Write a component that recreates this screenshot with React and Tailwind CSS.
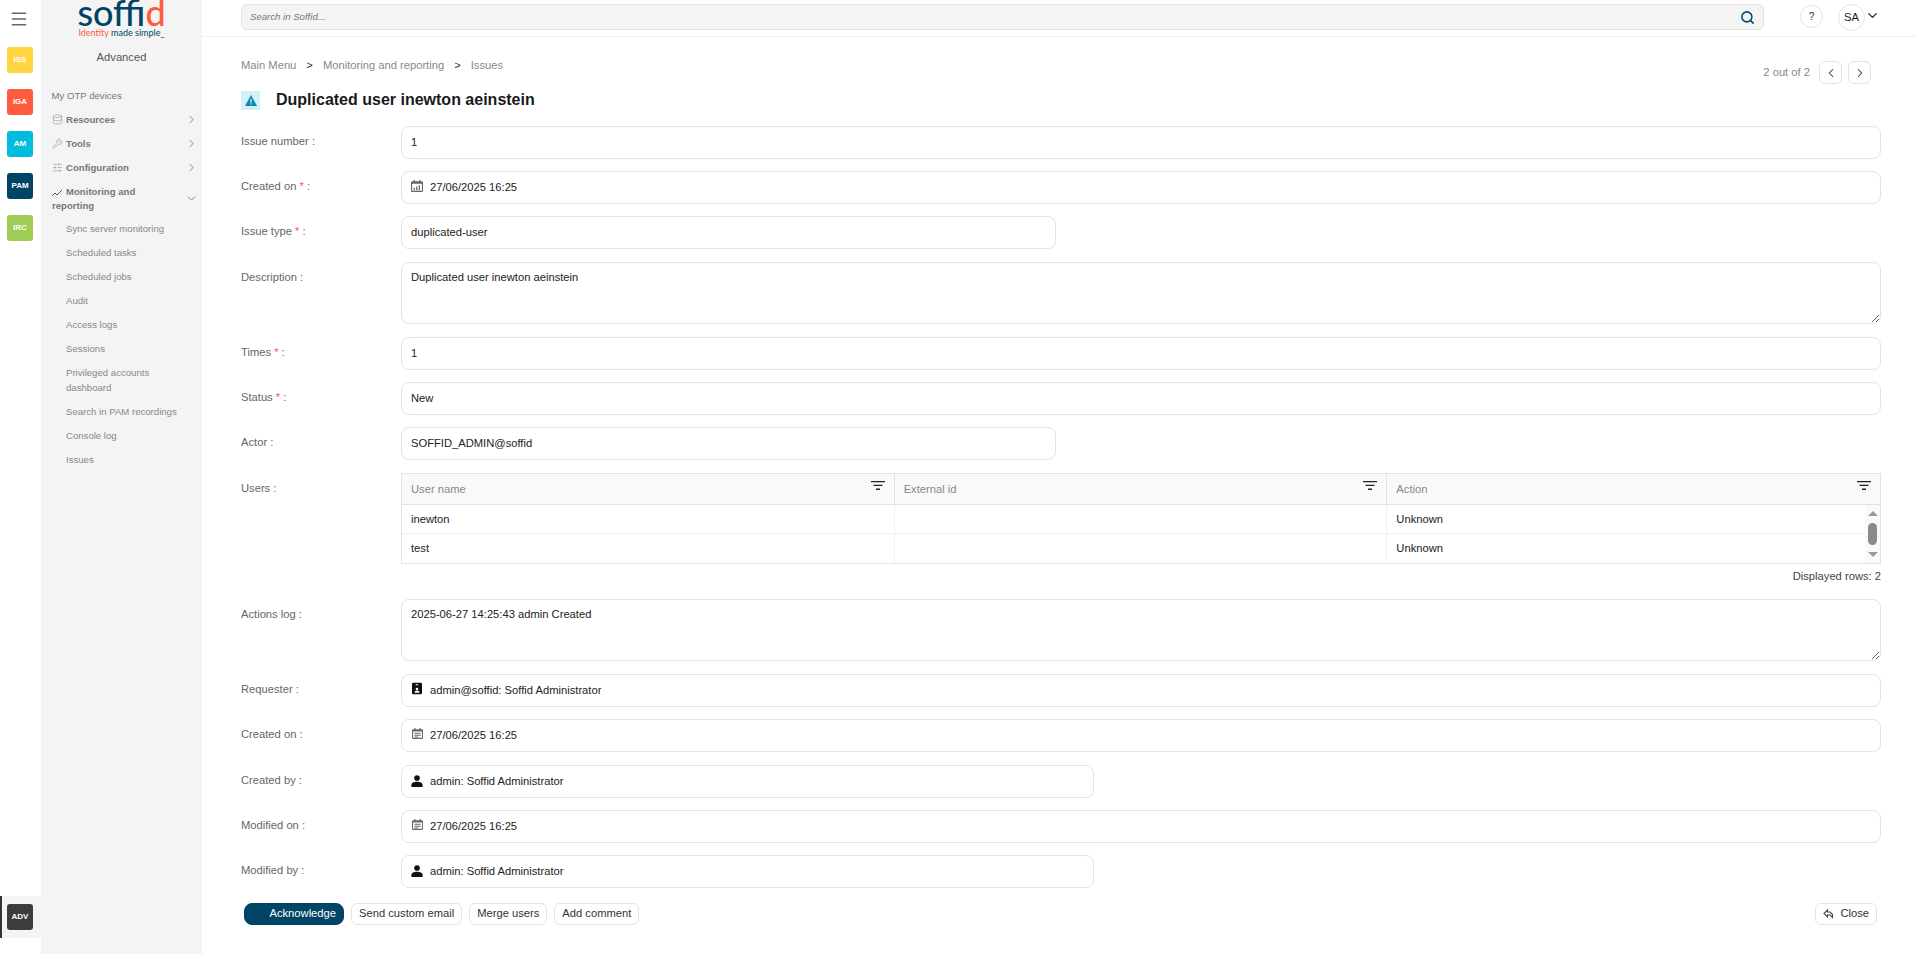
import { ChevronDown, ChevronLeft, ChevronRight, Database, Menu, Search, SlidersHorizontal, Wrench } from 'lucide-react';

const tiles = [
  { label: 'ISS', color: 'bg-[#ffd43f]', mt: 'mt-0' },
  { label: 'IGA', color: 'bg-[#ff5c3e]', mt: 'mt-4' },
  { label: 'AM', color: 'bg-[#00bcdd]', mt: 'mt-4' },
  { label: 'PAM', color: 'bg-[#004466]', mt: 'mt-4' },
  { label: 'IRC', color: 'bg-[#9fcc55]', mt: 'mt-4' },
];

const subItems = [
  'Sync server monitoring',
  'Scheduled tasks',
  'Scheduled jobs',
  'Audit',
  'Access logs',
  'Sessions',
  'Privileged accounts dashboard',
  'Search in PAM recordings',
  'Console log',
  'Issues',
];

const CalendarIcon = () => (
  <svg className="w-[12px] h-[12px] shrink-0 -mt-1" viewBox="0 0 14 14" fill="#666">
    <path d="M3 0h1.500v1.500h5V0H11v1.500h1.500A1.500 1.500 0 0 1 14 3v9.500a1.500 1.500 0 0 1-1.500 1.500h-11A1.500 1.500 0 0 1 0 12.500V3a1.500 1.500 0 0 1 1.500-1.500H3V0zM1.300 4.500v8h11.400v-8H1.300z" />
    <path d="M3 9h1.500v3H3zM6 7.500h1.500V12H6zM9 6h1.500v6H9z" />
  </svg>
);

const CalendarLinesIcon = () => (
  <svg className="w-[11px] h-[11px] mx-[0.5px] shrink-0 -mt-1" viewBox="0 0 14 14" fill="#666">
    <path d="M3 0h1.500v1.500h5V0H11v1.500h1.500A1.500 1.500 0 0 1 14 3v9.500a1.500 1.500 0 0 1-1.500 1.500h-11A1.500 1.500 0 0 1 0 12.500V3a1.500 1.500 0 0 1 1.500-1.500H3V0zM1.300 4.500v8h11.400v-8H1.300z" />
    <path d="M3 6h8v1.300H3zM3 8.500h8v1.300H3zM3 10.700h5V12H3z" />
  </svg>
);

const UserIcon = () => (
  <svg className="w-[12px] h-[12px] shrink-0 -mt-0.5" viewBox="0 0 14 14" fill="#111">
    <circle cx="7" cy="3.500" r="3.300" />
    <path d="M0.500 14v-2.500C0.500 9.300 3.500 8 7 8s6.500 1.300 6.500 3.500V14z" />
  </svg>
);

const BadgeIcon = () => (
  <svg className="w-[10px] h-[13px] mx-[1px] shrink-0 -mt-1" viewBox="0 0 12 14" fill="#111">
    <path fillRule="evenodd" d="M1.500 0h9A1.500 1.500 0 0 1 12 1.500v11a1.500 1.500 0 0 1-1.500 1.500h-9A1.500 1.500 0 0 1 0 12.500v-11A1.500 1.500 0 0 1 1.500 0zM4.500 2v1h3V2zM6 6a1.600 1.600 0 1 0 0 3.200A1.600 1.600 0 0 0 6 6zM3.200 12h5.600v-1c0-.8-1.300-1.300-2.800-1.300S3.200 10.200 3.200 11z" />
  </svg>
);

const FilterIcon = () => (
  <svg className="w-[14px] h-[9px]" viewBox="0 0 14 9" fill="#222">
    <path d="M0 0h14v1.300H0zM2.500 3.800h9v1.300h-9zM5 7.600h4v1.300H5z" />
  </svg>
);

function Box({ icon, narrow, wide, children }) {
  const width = wide ? 'w-[693px]' : narrow ? 'w-[655px]' : 'w-full';
  return (
    <div className={`${width} h-[33px] flex items-center gap-[7px] px-[9px] border border-[#e3e3e3] rounded-lg text-[11.200px] text-[#222]`}>
      {icon}
      <span>{children}</span>
    </div>
  );
}

function Field({ label, required, children, className = 'mb-3' }) {
  return (
    <div className={`flex ${className}`}>
      <div className="w-[160px] shrink-0 pt-[8px] text-[11.200px] leading-[15px] text-[#666]">
        {label}
        {required && <span className="text-[#f55]"> *</span>} :
      </div>
      <div className="flex-1 min-w-0">{children}</div>
    </div>
  );
}

function Area({ value }) {
  return (
    <textarea
      readOnly
      defaultValue={value}
      className="block w-full h-[62px] px-[9px] py-[7px] border border-[#e3e3e3] rounded-lg text-[11.200px] leading-[15px] text-[#222] outline-none"
    />
  );
}

function Btn({ children, className = '' }) {
  return (
    <button className={`h-[22px] px-[7px] border border-[#e3e3e3] rounded-md text-[11.200px] leading-none text-[#333] bg-white ${className}`}>
      {children}
    </button>
  );
}

function NavItem({ icon, open, children }) {
  return (
    <div className="flex items-center justify-between pl-[11px] pr-[4px] py-[5px] font-bold text-[#777]">
      <div className="w-[125px]">
        <span className="inline-block align-[-2px] mr-[3px]">{icon}</span>
        {children}
      </div>
      {open ? <ChevronDown size={13} strokeWidth={1.25} className="text-[#555]" /> : <ChevronRight size={13} strokeWidth={1.25} className="text-[#555]" />}
    </div>
  );
}

function UsersTable() {
  const cols = ['User name', 'External id', 'Action'];
  const rows = [['inewton', '', 'Unknown'], ['test', '', 'Unknown']];
  return (
    <div className="border border-[#e3e3e3] text-[11.200px]">
      <div className="grid grid-cols-3 h-[31px] bg-[#f9f9f9] border-b border-[#e3e3e3]">
        {cols.map((c, i) => (
          <div key={c} className={`relative flex items-center px-[9px] text-[#888] ${i < 2 ? 'border-r border-[#e3e3e3]' : ''}`}>
            {c}
            <span className="absolute right-[9px] top-[7px]"><FilterIcon /></span>
          </div>
        ))}
      </div>
      <div className="relative">
        {rows.map((r, i) => (
          <div key={i} className={`grid grid-cols-3 h-[29px] ${i === 0 ? 'border-b border-[#f0f0f0] pt-px' : ''}`}>
            {r.map((v, j) => (
              <div key={j} className={`flex items-center px-[9px] text-[#222] ${j < 2 ? 'border-r border-[#f0f0f0]' : ''}`}>{v}</div>
            ))}
          </div>
        ))}
        {/* scrollbar */}
        <div className="absolute right-0 top-0 bottom-0 w-[15px] bg-[#fafafa] flex flex-col items-center justify-between py-[6px]">
          <div className="w-0 h-0 border-x-[5px] border-x-transparent border-b-[5px] border-b-[#999]" />
          <div className="w-[9px] h-[22px] rounded-full bg-[#8a8a8a]" />
          <div className="w-0 h-0 border-x-[5px] border-x-transparent border-t-[5px] border-t-[#999]" />
        </div>
      </div>
    </div>
  );
}

export default function App() {
  return (
    <div className="flex h-[954px] overflow-hidden bg-white font-['Liberation_Sans',sans-serif]">
      {/* icon rail */}
      <div className="w-[41px] shrink-0 flex flex-col justify-between pb-4">
        <div className="flex flex-col items-start pl-[7px]">
          <Menu size={20} strokeWidth={1.75} className="mt-[9px] mb-[18px] ml-[2px] text-[#666]" />
          {tiles.map((t) => (
            <div key={t.label} className={`${t.color} ${t.mt} w-[26px] h-[26px] rounded-[3px] flex items-center justify-center text-[8px] font-bold text-white`}>
              {t.label}
            </div>
          ))}
        </div>
        <div className="h-[42px] border-l-2 border-[#333] bg-[#f4f4f4] flex items-center pl-[5px]">
          <div className="w-[26px] h-[26px] rounded-[3px] bg-[#3c3c3c] flex items-center justify-center text-[8px] font-bold text-white">ADV</div>
        </div>
      </div>

      {/* sidebar */}
      <div className="w-[161px] shrink-0 bg-[#f4f4f4] text-[9.600px] leading-[14px]">
        <div className="h-[37px] flex flex-col items-center">
          <div className="h-[22px] -mt-[6px] mb-[12px] font-['Lato',sans-serif] text-[36px] leading-[36px] font-medium text-[#004466]">
            soff<span className="text-[#ff5c3e]">id</span>
          </div>
          <div className="text-[9px] leading-[9px] font-['Lato',sans-serif]">
            <span className="text-[#ff5c3e]">Identity</span> <span className="text-[#004466]">made simple_</span>
          </div>
        </div>
        <div className="mt-[12px] mb-[18.500px] text-center text-[11.200px] leading-[16px] text-[#555]">Advanced</div>
        <div className="pl-[10.500px] py-[5px] text-[#777]">My OTP devices</div>
        <NavItem icon={<Database size={11} strokeWidth={1} />}>Resources</NavItem>
        <NavItem icon={<Wrench size={11} strokeWidth={1} />}>Tools</NavItem>
        <NavItem icon={<SlidersHorizontal size={11} strokeWidth={1} />}>Configuration</NavItem>
        <NavItem open icon={<svg className="w-[11px] h-[8px]" viewBox="0 0 11 8" fill="none" stroke="#555"><path d="M0 7l3-3 2 2 5-5" /></svg>}>Monitoring and reporting</NavItem>
        {subItems.map((s) => (
          <div key={s} className="pl-[25px] pr-[14px] py-[4.750px] text-[#888] leading-[14.500px]">{s}</div>
        ))}
      </div>

      {/* main */}
      <div className="flex-1 min-w-0">
        <div className="h-[37px] border-b border-[#f0f0f0] flex items-start pl-[39px]">
          <div className="mt-1 w-[1523px] shrink-0 h-[26px] rounded-md border border-[#e3e3e3] bg-[#f4f4f4] flex items-center justify-between pl-2 pr-[8px]">
            <span className="text-[9.600px] italic text-[#777]">Search in Soffid...</span>
            <Search size={15} strokeWidth={2.5} className="text-[#004e75]" />
          </div>
          <div className="ml-[36px] mt-[5px] w-[23px] h-[23px] shrink-0 rounded-full border border-[#e3e3e3] flex items-center justify-center text-[10px] text-[#333]">?</div>
          <div className="ml-[15px] mt-1 w-[27px] h-[27px] shrink-0 rounded-full border border-[#e3e3e3] flex items-center justify-center text-[11.200px] text-[#222]">SA</div>
          <ChevronDown size={15} strokeWidth={2} className="mt-[8px] shrink-0 text-[#222]" />
        </div>

        <div className="pl-[39px] pr-[35px]">
          <div className="flex items-start justify-between h-[54px]">
            <div className="mt-[21px] flex gap-[10px] text-[11.200px] leading-[15px] text-[#888]">
              <span>Main Menu</span><span className="text-[#333]">&gt;</span>
              <span>Monitoring and reporting</span><span className="text-[#333]">&gt;</span>
              <span>Issues</span>
            </div>
            <div className="mt-[24px] mr-[10px] flex items-center gap-[6px] text-[11.200px] text-[#888]">
              <span className="mr-[3px]">2 out of 2</span>
              <div className="w-[23px] h-[23px] rounded-md border border-[#e3e3e3] flex items-center justify-center"><ChevronLeft size={14} strokeWidth={1.75} className="text-[#333]" /></div>
              <div className="w-[23px] h-[23px] rounded-md border border-[#e3e3e3] flex items-center justify-center"><ChevronRight size={14} strokeWidth={1.75} className="text-[#333]" /></div>
            </div>
          </div>

          <div className="flex items-center gap-[16px] h-[19px] mb-[16px]">
            <div className="w-[19px] h-[19px] bg-[#d3f1f8] flex items-center justify-center">
              <svg className="w-[12px] h-[11px]" viewBox="0 0 12 11">
                <path d="M6 0l6 11H0z" fill="#0c8cab" />
                <path d="M5.400 3.800h1.200v3.700H5.400zM5.400 8.300h1.200v1.200H5.400z" fill="#d3f1f8" />
              </svg>
            </div>
            <h1 className="-mt-[1px] text-[16px] leading-none font-bold text-[#1a1a1a]">Duplicated user inewton aeinstein</h1>
          </div>

          <Field label="Issue number"><Box>1</Box></Field>
          <Field label="Created on" required><Box icon={<CalendarIcon />}>27/06/2025 16:25</Box></Field>
          <Field label="Issue type" required className="mb-[13px]"><Box narrow>duplicated-user</Box></Field>
          <Field label="Description" className="mb-[13px]"><Area value="Duplicated user inewton aeinstein" /></Field>
          <Field label="Times" required><Box>1</Box></Field>
          <Field label="Status" required><Box>New</Box></Field>
          <Field label="Actor" className="mb-[13px]"><Box narrow>SOFFID_ADMIN@soffid</Box></Field>
          <Field label="Users" className="mb-[12px]">
            <UsersTable />
            <div className="h-[23px] text-right text-[11.200px] leading-[25px] text-[#444]">Displayed rows: 2</div>
          </Field>
          <Field label="Actions log" className="mb-[13px]"><Area value="2025-06-27 14:25:43 admin Created" /></Field>
          <Field label="Requester"><Box icon={<BadgeIcon />}>admin@soffid: Soffid Administrator</Box></Field>
          <Field label="Created on" className="mb-[13px]"><Box icon={<CalendarLinesIcon />}>27/06/2025 16:25</Box></Field>
          <Field label="Created by"><Box wide icon={<UserIcon />}>admin: Soffid Administrator</Box></Field>
          <Field label="Modified on"><Box icon={<CalendarLinesIcon />}>27/06/2025 16:25</Box></Field>
          <Field label="Modified by" className="mb-[15px]"><Box wide icon={<UserIcon />}>admin: Soffid Administrator</Box></Field>

          <div className="flex items-center justify-between pl-[3px] pr-1">
            <div className="flex gap-[7px]">
              <Btn className="w-[100px] text-right !border-[#004466] !bg-[#004466] !text-white !rounded-lg">Acknowledge</Btn>
              <Btn>Send custom email</Btn>
              <Btn>Merge users</Btn>
              <Btn>Add comment</Btn>
            </div>
            <Btn className="flex items-center gap-[6px]">
              <svg className="w-[11px] h-[10px]" viewBox="0 0 11 10" fill="none" stroke="#444" strokeWidth="1.100"><path d="M4.500 1L1 4.500 4.500 8V6h2.500l2.500 2.500V5.500L7 3H4.500z" /></svg>
              Close
            </Btn>
          </div>
        </div>
      </div>
    </div>
  );
}
